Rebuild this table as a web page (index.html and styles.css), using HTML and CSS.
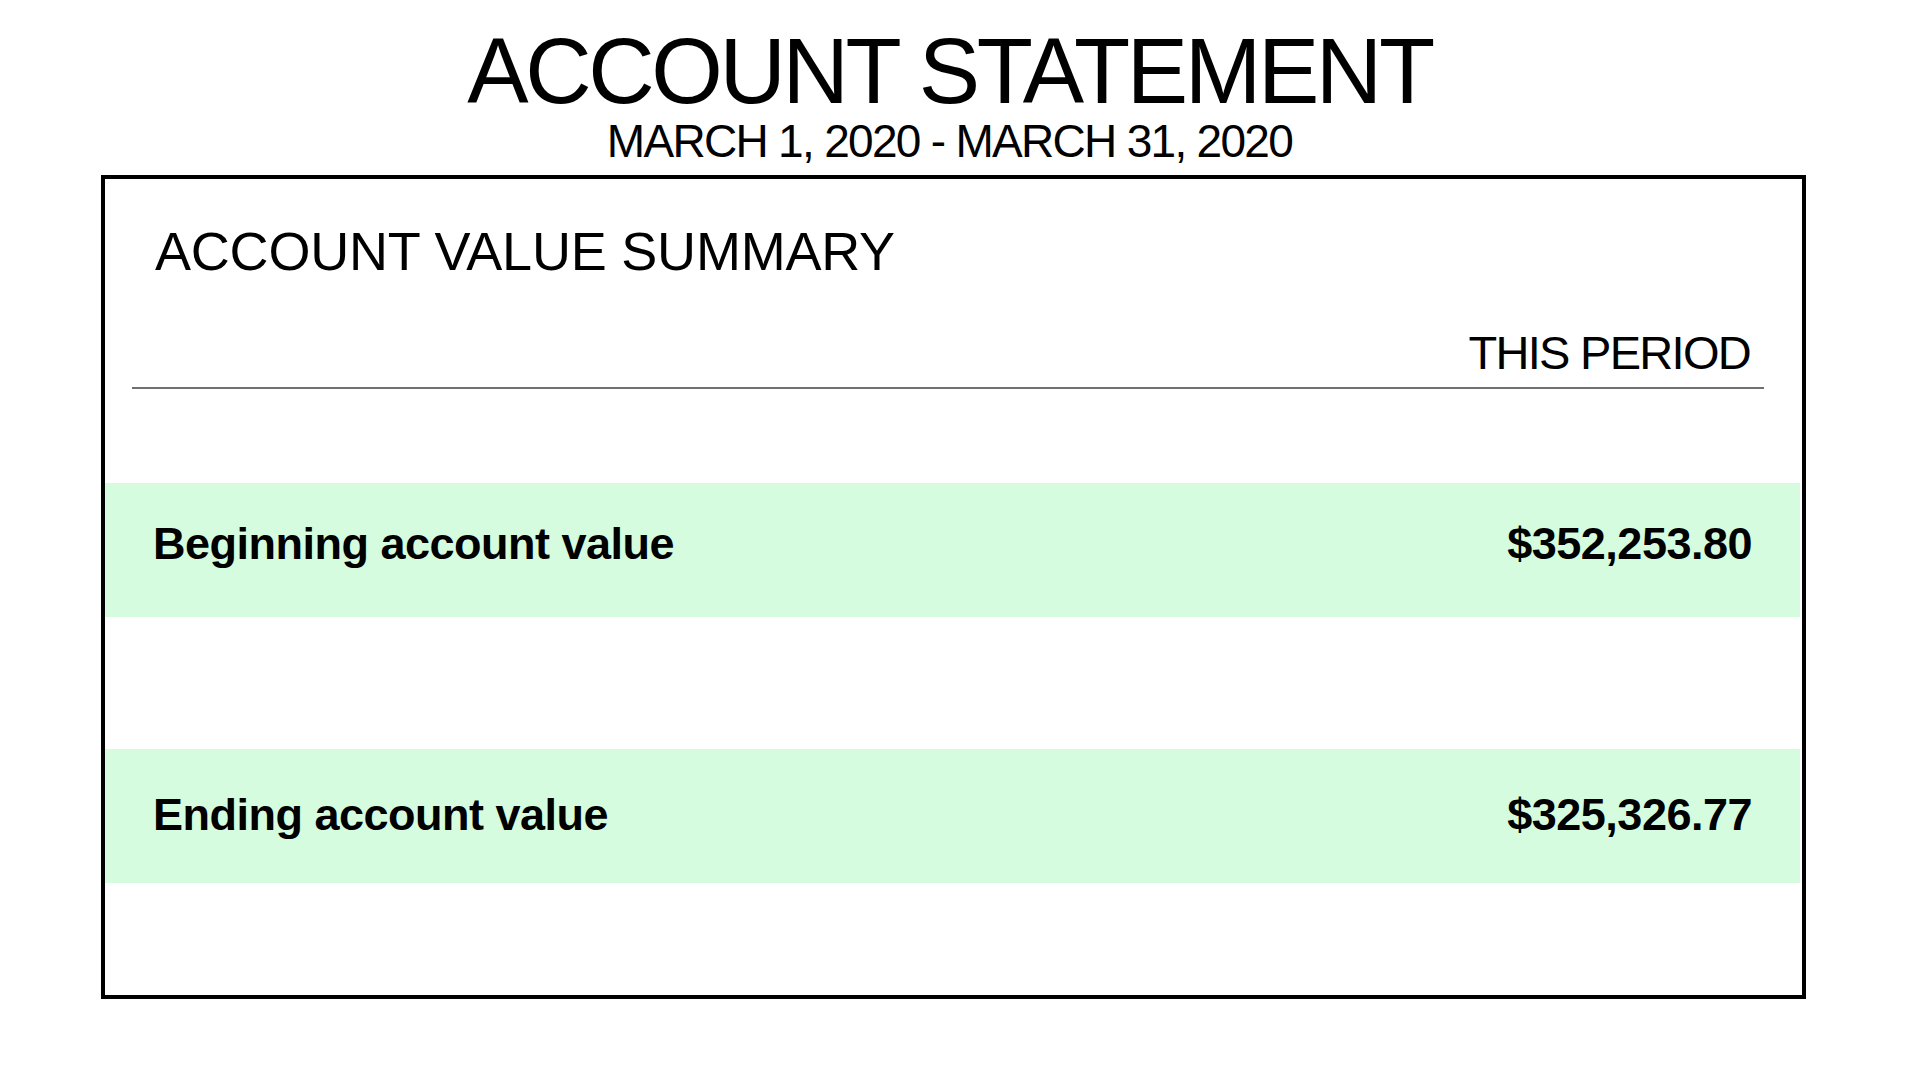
FILE: index.html
```html
<!DOCTYPE html>
<html lang="en">
<head>
<meta charset="utf-8">
<title>Account Statement</title>
<link rel="stylesheet" href="styles.css">
</head>
<body>
<div class="page">
  <header class="header">
    <h1 class="title">ACCOUNT STATEMENT</h1>
    <p class="period">MARCH 1, 2020 - MARCH 31, 2020</p>
  </header>
  <section class="card">
    <h2 class="card-title">ACCOUNT VALUE SUMMARY</h2>
    <div class="col-head">
      <span class="col-label">THIS PERIOD</span>
    </div>
    <div class="row first">
      <span class="row-label">Beginning account value</span>
      <span class="row-value">$352,253.80</span>
    </div>
    <div class="row second">
      <span class="row-label">Ending account value</span>
      <span class="row-value">$325,326.77</span>
    </div>
  </section>
</div>
</body>
</html>
```

FILE: styles.css
```css
html, body {
  margin: 0;
  padding: 0;
  background: #ffffff;
}

body {
  font-family: "Liberation Sans", Arial, Helvetica, sans-serif;
  color: #000000;
}

.page {
  width: 1705px;
  margin-left: 101px;
  padding-top: 25px;
}

.header {
  display: flex;
  flex-direction: column;
  align-items: center;
  padding-right: 8px;
}

.title {
  margin: 0;
  font-size: 92px;
  line-height: 92px;
  font-weight: 400;
  letter-spacing: -3.4px;
}

.period {
  margin: 1px 0 0 0;
  font-size: 46px;
  line-height: 46px;
  font-weight: 400;
  letter-spacing: -1.7px;
}

.card {
  box-sizing: border-box;
  margin-top: 11px;
  width: 1705px;
  height: 824px;
  border: 4px solid #000000;
  padding-top: 45px;
  display: flex;
  flex-direction: column;
}

.card-title {
  margin: 0 0 0 50px;
  font-size: 54px;
  line-height: 54px;
  font-weight: 400;
  letter-spacing: -0.2px;
}

.col-head {
  margin: 51px 38px 0 27px;
  padding-right: 14px;
  border-bottom: 2px solid #707070;
  padding-bottom: 11px;
  display: flex;
  justify-content: flex-end;
}

.col-label {
  font-size: 47px;
  line-height: 47px;
  letter-spacing: -1.7px;
}

.row {
  height: 134px;
  margin-right: 2px;
  background: #d5fcdf;
  display: flex;
  align-items: center;
  justify-content: space-between;
  padding: 0 48px 12px 48px;
  box-sizing: border-box;
  font-weight: 700;
  font-size: 45px;
  line-height: 50px;
  letter-spacing: -0.5px;
}

.row.first {
  margin-top: 94px;
}

.row.second {
  margin-top: 132px;
  padding-bottom: 2px;
}
```
